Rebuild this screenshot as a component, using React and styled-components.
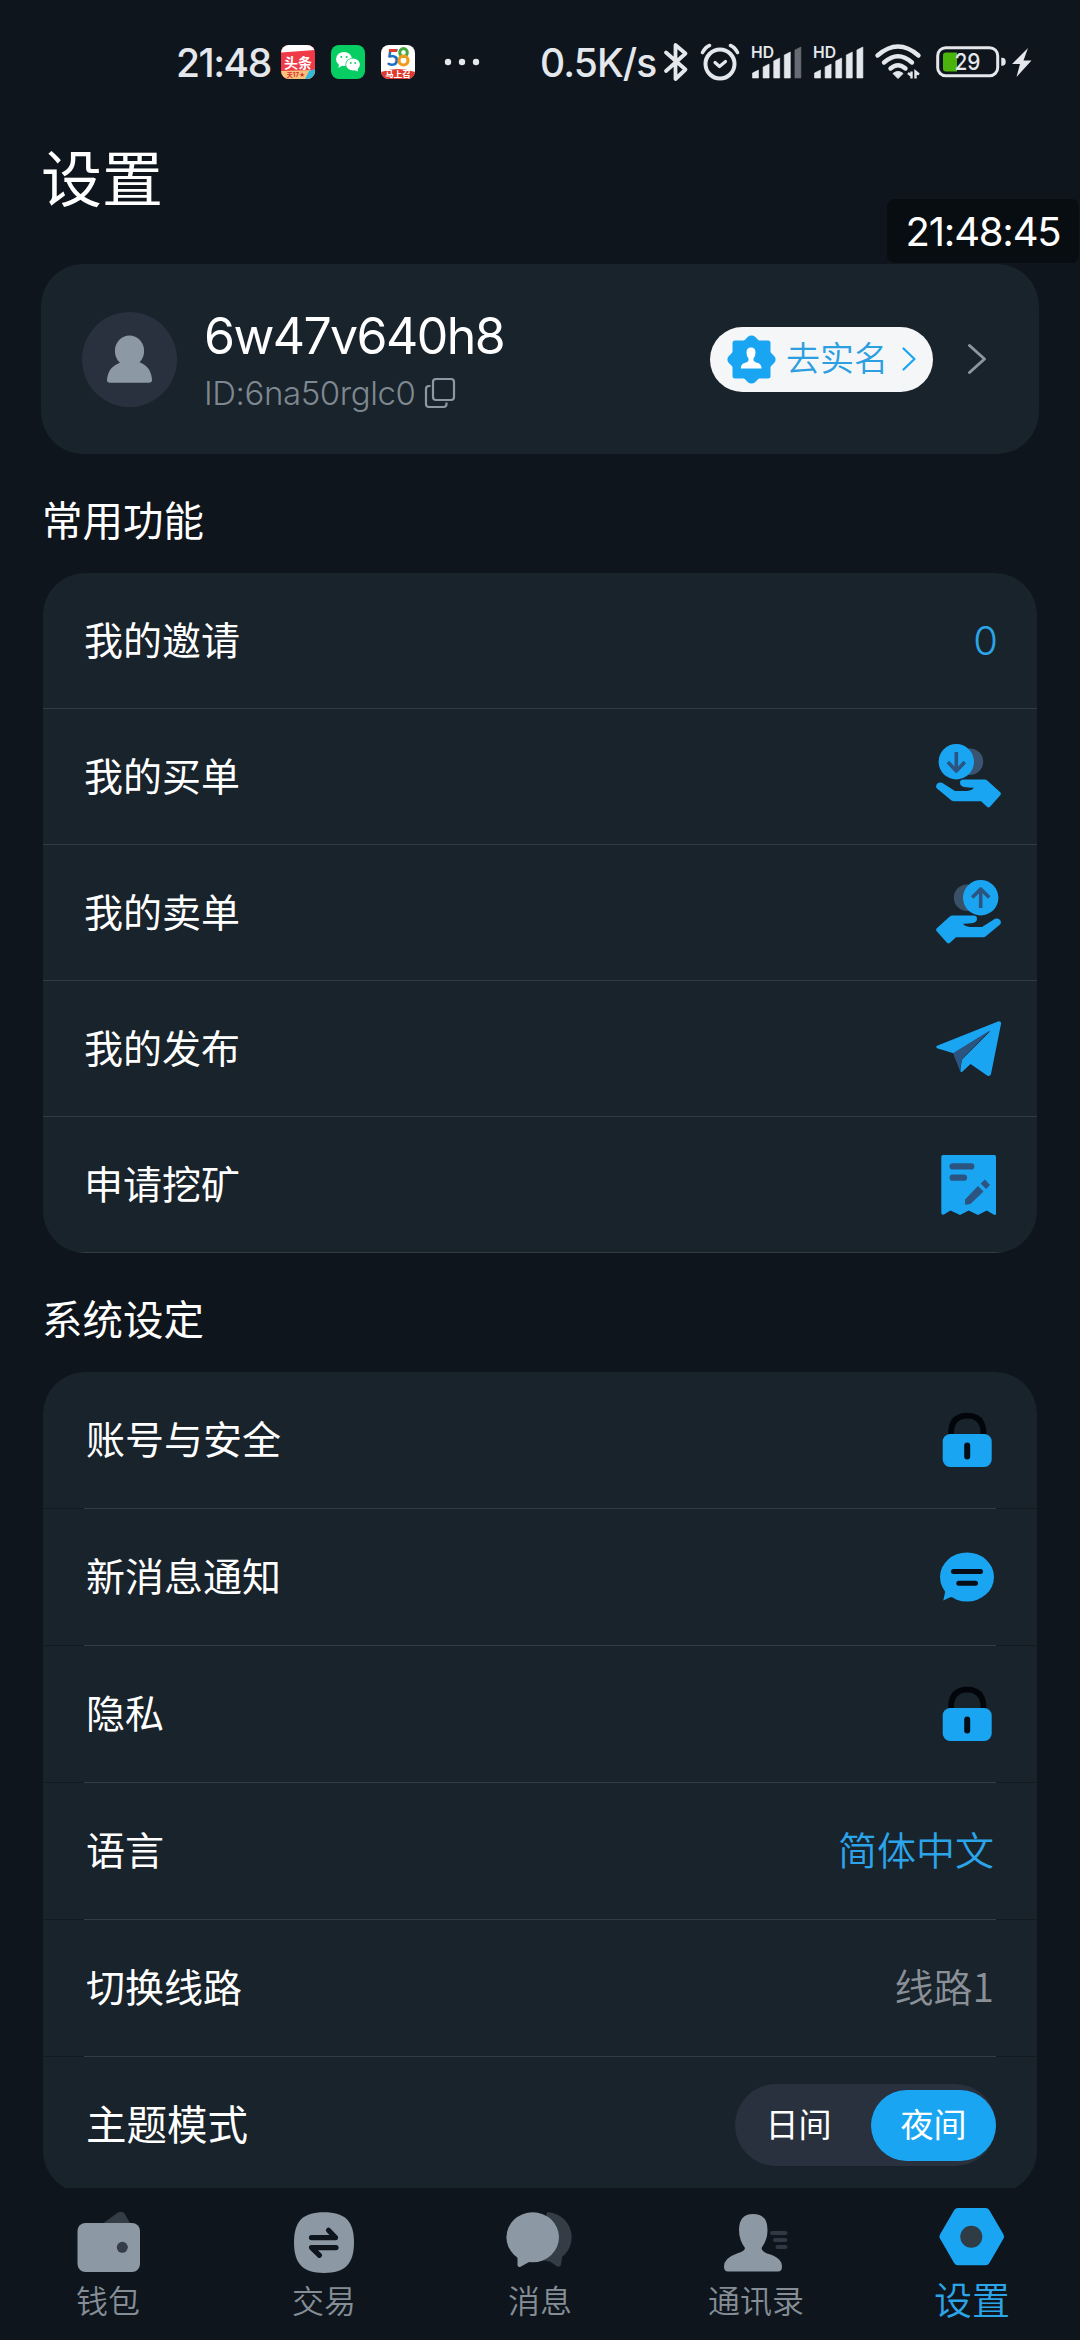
import React, { useState } from "react";
import styled, { createGlobalStyle, css } from "styled-components";

const BLUE = "#1aa5f3";
const GREY = "#8c98a4";
const DEEP = "#2b5580";

const GlobalStyle = createGlobalStyle`
  * {
    box-sizing: border-box;
  }

  body {
    margin: 0;
    background-color: #0e151c;
    font-family: Inter, "Noto Sans CJK SC", sans-serif;
    color: #ffffff;
  }

  svg {
    display: block;
    flex-shrink: 0;
    overflow: visible;
  }
`;

/* status bar icons */

const ToutiaoIcon = () => (
  <svg width="34" height="34" viewBox="0 0 34 34">
    <clipPath id="appClip">
      <rect width="34" height="34" rx="8" />
    </clipPath>
    <g clipPath="url(#appClip)">
      <rect width="34" height="34" fill="#f03a48" />
      <path d="M0 0H34V5L0 7.5Z" fill="#ffffff" />
      <path d="M0 26L34 25V34H0Z" fill="#f6c27c" />
      <path d="M28 26L34 24V34H24Z" fill="#35b6d8" />
    </g>
    <text x="17" y="22.500" textAnchor="middle" fontSize="14" fontWeight="700" fill="#ffffff">
      头条
    </text>
    <text x="15" y="32" textAnchor="middle" fontSize="6" fontWeight="700" fill="#d8322c">
      天17★
    </text>
  </svg>
);

const WechatIcon = () => (
  <svg width="34" height="34" viewBox="0 0 34 34">
    <rect width="34" height="34" rx="8" fill="#06ce62" />
    <ellipse cx="13" cy="14" rx="8" ry="7" fill="#ffffff" />
    <path d="M8 18L7.500 23L12 20Z" fill="#ffffff" />
    <ellipse cx="22" cy="19.500" rx="7.600" ry="6.600" fill="#06ce62" />
    <ellipse cx="22" cy="19.500" rx="6.900" ry="5.900" fill="#ffffff" />
    <path d="M23 25L27 26.500L26.500 22Z" fill="#ffffff" />
    <g fill="#06ce62">
      <circle cx="10.300" cy="12" r="1" />
      <circle cx="15.600" cy="12" r="1" />
      <circle cx="19.800" cy="18" r="0.900" />
      <circle cx="24.200" cy="18" r="0.900" />
    </g>
  </svg>
);

const FiveEightIcon = () => (
  <svg width="34" height="34" viewBox="0 0 34 34">
    <rect width="34" height="34" rx="8" fill="#ffffff" />
    <path d="M0 27Q17 21 34 27Q33 34 26 34H8Q1 34 0 27Z" fill="#e03a2e" />
    <text x="5" y="20.500" fontSize="23" fontWeight="700" fontFamily="Lato" fill="#1d6fc0">
      5
    </text>
    <ellipse cx="22.500" cy="7.500" rx="3.800" ry="4" fill="none" stroke="#43a83c" strokeWidth="3" />
    <ellipse cx="22.500" cy="15.500" rx="4.500" ry="4.500" fill="none" stroke="#f39a1c" strokeWidth="3.200" />
    <path d="M8 5.500H16" stroke="#e03a2e" strokeWidth="3" />
    <text x="17" y="32" textAnchor="middle" fontSize="8.500" fontWeight="700" fill="#ffffff">
      马上召
    </text>
  </svg>
);

const MoreDots = () => (
  <svg width="36" height="8" viewBox="0 0 36 8" fill="#e4e7ec">
    <circle cx="4" cy="4" r="3.200" />
    <circle cx="18" cy="4" r="3.200" />
    <circle cx="32" cy="4" r="3.200" />
  </svg>
);

const BluetoothIcon = () => (
  <svg width="24" height="40" viewBox="0 0 24 40">
    <path
      d="M2 10.500L21.500 27.500L11.500 37V3L21.500 11.500L2 29"
      fill="none"
      stroke="#e4e7ec"
      strokeWidth="3.800"
      strokeLinejoin="round"
      strokeLinecap="round"
    />
  </svg>
);

const AlarmIcon = () => (
  <svg width="40" height="38" viewBox="0 0 40 38">
    <g fill="none" stroke="#e4e7ec" strokeWidth="4" strokeLinecap="round" strokeLinejoin="round">
      <circle cx="20" cy="21" r="14.500" />
      <path d="M2.500 9.500Q5.500 4 9.500 2.500M37.500 9.500Q34.500 4 30.500 2.500" strokeWidth="3.600" />
      <path d="M15 19.500L19.500 23.500L25.500 18.500" strokeWidth="3.200" />
    </g>
  </svg>
);

const SignalIcon = ({ level }) => (
  <svg width="50" height="34" viewBox="0 0 50 34">
    <text x="-1" y="13" fontSize="15.500" fontWeight="600" fill="#e4e7ec" textLength="23" lengthAdjust="spacingAndGlyphs">
      HD
    </text>
    {[8, 14, 20, 26, 31].map((h, i) => (
      <path
        key={h}
        d={`M${i * 10.6 + 0.5} 33V${36 - h}L${i * 10.6 + 6.5} ${33 - h}V33Z`}
        fill={i < level ? "#e4e7ec" : "#676b73"}
        stroke={i < level ? "#e4e7ec" : "#676b73"}
        strokeWidth="0.600"
        strokeLinejoin="round"
      />
    ))}
  </svg>
);

const WifiIcon = () => (
  <svg width="48" height="36" viewBox="1 0 48 36">
    <g fill="none" stroke="#e4e7ec" strokeWidth="4.400" strokeLinecap="round">
      <path d="M2.500 11.500Q23 -6.500 43.500 11.500" />
      <path d="M9 18.500Q23 6 37 18.500" />
      <path d="M15.500 24.500Q23 18 30.500 24.500" />
    </g>
    <path d="M18 29.500Q23 25.500 28 29.500L23 34.500Z" fill="#e4e7ec" stroke="#e4e7ec" strokeLinejoin="round" />
    <path d="M33 29L36.500 32V27.500V34.500M40.500 34.500V27.500L44 30.500" fill="none" stroke="#e4e7ec" strokeWidth="2.400" />
  </svg>
);

const BatteryIcon = () => (
  <svg width="70" height="32" viewBox="0 0 70 32">
    <rect x="1.700" y="1.700" width="60" height="28" rx="8" fill="none" stroke="#e4e7ec" strokeWidth="3" />
    <path d="M10 6.500H21V25.500H10Q7 25.500 7 22.500V9.500Q7 6.500 10 6.500Z" fill="#4bb40c" />
    <path d="M66 12.500Q69 12.500 69 15.700Q69 19 66 19Z" fill="#e4e7ec" stroke="#e4e7ec" strokeWidth="1.500" />
    <text x="31.500" y="24" textAnchor="middle" fontSize="23" fontWeight="500" fill="#e4e7ec" textLength="26" lengthAdjust="spacingAndGlyphs">
      29
    </text>
  </svg>
);

const BoltIcon = () => (
  <svg width="20" height="29" viewBox="0 0 20 29">
    <path d="M16 0L0 16H8L4.500 29L19.500 12.500H11.500Z" fill="#e4e7ec" />
  </svg>
);

/* profile icons */

const AvatarIcon = () => (
  <svg width="95" height="95" viewBox="0 0 95 95">
    <circle cx="47.500" cy="47.500" r="47.500" fill="#28313d" />
    <ellipse cx="47.500" cy="39" rx="14.600" ry="15.500" fill={GREY} />
    <path d="M37 48L40 50Q26 54 25 68Q25 70.700 28 70.700H67Q70 70.700 70 68Q69 54 57 50L58 48Z" fill={GREY} />
  </svg>
);

const CopyIcon = () => (
  <svg width="30" height="30" viewBox="0 0 30 30" fill="none" stroke={GREY} strokeWidth="2.200">
    <rect x="8" y="1" width="21" height="21" rx="3" />
    <path d="M5.500 8H4Q1 8 1 11V26Q1 29 4 29H18.500Q21.500 29 21.500 26V24.500" />
  </svg>
);

const VerifyIcon = () => (
  <svg width="49" height="49" viewBox="0 0 49 49">
    <rect x="5.500" y="5.500" width="38" height="38" rx="2.500" fill={BLUE} />
    <rect x="6" y="6" width="37" height="37" rx="5" fill={BLUE} transform="rotate(45 24.500 24.500)" />
    <path
      d="M19.500 17.500Q19.500 12.500 24 12.500Q28.500 12.500 28.500 17.500Q28.500 21.500 26.500 23.500V25.500Q28 27.500 31 28Q34.500 29 34.500 33.500H13.800Q13.800 29 17.500 28Q20.500 27.500 21.500 25.500V23.500Q19.500 21.500 19.500 17.500Z"
      fill="#ffffff"
    />
  </svg>
);

const Chevron = ({ width, height, color, stroke }) => (
  <svg width={width} height={height} viewBox={`0 0 ${width} ${height}`}>
    <path
      d={`M1.500 1.500L${width - 1.5} ${height / 2}L1.500 ${height - 1.5}`}
      fill="none"
      stroke={color}
      strokeWidth={stroke}
      strokeLinecap="round"
      strokeLinejoin="round"
    />
  </svg>
);

/* list icons */

const HAND =
  "M1 44.500Q-0.500 42.500 0.500 40.500Q2.500 37.500 6 38.800L19 47H31Q36 46.500 38 43.800Q34 44 28 43Q24 42 24 38.800Q24 35.500 27.500 35.500H48.500Q50 35.500 51.500 36.800L64.500 48.500Q65.300 49.800 64.500 51L54 62.800Q52.500 64 51 62.800L45 57.300H18Q16.500 57.300 15.500 56.500Z";

const BuyIcon = () => (
  <svg width="65" height="65" viewBox="0 0 65 65">
    <circle cx="34" cy="17.700" r="13.200" fill="#395370" />
    <circle cx="20.300" cy="17.700" r="17.700" fill={BLUE} />
    <path d="M20.300 8V27M11.800 18L20.300 27L28.800 18" fill="none" stroke={DEEP} strokeWidth="3.600" strokeLinejoin="round" />
    <path d={HAND} fill={BLUE} />
  </svg>
);

const SellIcon = () => (
  <svg width="65" height="65" viewBox="0 0 65 65">
    <circle cx="31" cy="17.700" r="13.200" fill="#3a5067" />
    <circle cx="44.700" cy="17.700" r="17.700" fill={BLUE} />
    <path d="M44.700 28V9M36.200 17.500L44.700 9L53.200 17.500" fill="none" stroke={DEEP} strokeWidth="3.600" strokeLinejoin="round" />
    <path d={HAND} fill={BLUE} transform="translate(65 0) scale(-1 1)" />
  </svg>
);

const PlaneIcon = () => (
  <svg width="65" height="56" viewBox="0 0 65 56">
    <path d="M17.500 32.300L1 27.200Q-0.800 26 1 24.800L62 0.400Q65.400 -0.200 65 3L55 53Q54 55.800 51.500 54.700L34.500 43L26.500 50.500Q24.200 52 24.200 49L26 38.500L54.500 10Z" fill={BLUE} />
    <path d="M17 32.300L24.500 51Q24.400 41 26.500 37.500L54.500 9Z" fill={DEEP} />
  </svg>
);

const ReceiptIcon = () => (
  <svg width="65" height="60" viewBox="0 0 65 60">
    <path d="M7 0H58.300Q60 0 60 1.700V59.500Q59 60.200 57.500 59.500L50.700 55.500L42 60L32.700 55.500L24 60L14.500 55.500L7.500 59.700Q5.300 60 5.300 58V1.700Q5.300 0 7 0Z" fill={BLUE} />
    <path d="M16.600 11.400H35.300M16.600 22.700H28" fill="none" stroke={DEEP} strokeWidth="6.200" strokeLinecap="round" />
    <path d="M29.500 44.500L42 31.500L47 36.500L34.500 48.500L29.500 49.300Z" fill={DEEP} stroke={DEEP} strokeLinejoin="round" />
    <path d="M44.700 28.500L49 24.500L54 30L50 34Z" fill={DEEP} />
  </svg>
);

const LockIcon = () => (
  <svg width="56" height="56" viewBox="0 0 56 56">
    <path d="M11 24V20Q12 3.700 27.200 3.700Q42.500 3.700 43.500 20V24" fill="none" stroke="#02060a" strokeWidth="5.800" />
    <rect x="2.700" y="22" width="49" height="33" rx="7.500" fill={BLUE} />
    <rect x="24.200" y="30.500" width="6" height="17" rx="3" fill="#040d16" />
  </svg>
);

const NoticeIcon = () => (
  <svg width="56" height="56" viewBox="0 0 56 56">
    <ellipse cx="27" cy="28" rx="27" ry="24.500" fill={BLUE} />
    <path d="M3.300 51.500L6 39L15 47Q9 48 3.300 51.500Z" fill={BLUE} />
    <path d="M13.500 22.500H40.500M18.800 34.300H35.500" stroke="#060d16" strokeWidth="5" strokeLinecap="round" />
  </svg>
);

/* tab icons */

const WalletIcon = () => (
  <svg width="72" height="64" viewBox="0 0 72 64">
    <path d="M30 15L46 3.500Q50 1.500 52.500 4.500L58.500 15Z" fill="#343d46" />
    <rect x="5.500" y="14" width="62.500" height="49" rx="8" fill={GREY} />
    <circle cx="50.300" cy="38.300" r="5.500" fill="#343d48" />
  </svg>
);

const TradeIcon = () => (
  <svg width="72" height="64" viewBox="0 0 72 64">
    <path d="M36 3.300C57 3.300 66 12 66 33.600C66 55 57 64 36 64C15 64 6 55 6 33.600C6 12 15 3.300 36 3.300Z" fill={GREY} />
    <path
      d="M23.500 28.600H47.500L40.500 21.300M48 38.600H23.500L31.500 46.300"
      fill="none"
      stroke="#0e151c"
      strokeWidth="5.200"
      strokeLinecap="round"
      strokeLinejoin="round"
    />
  </svg>
);

const MessageIcon = () => (
  <svg width="72" height="64" viewBox="0 0 72 64">
    <path d="M43 3.300A25 25 0 0 1 58 48L57 56Q55.500 59 52.500 57L46 52.500L30 50Z" fill="#343d46" />
    <ellipse cx="28.700" cy="28.300" rx="26.300" ry="25" fill={GREY} />
    <path d="M13.500 45V56.500Q14.500 59 17 57.500L26 52.500Z" fill={GREY} />
  </svg>
);

const ContactsIcon = () => (
  <svg width="72" height="64" viewBox="0 0 72 64">
    <path
      d="M19 21Q19 5 33 5Q47.500 5 47.500 21Q47.500 31 41.500 39Q41.500 42 47 44.500Q62 48.500 62 57.500Q62 62.500 58 62.500H8Q4 62.500 4 57.500Q4 49 17 44.500Q25 42 25 39Q19 31 19 21Z"
      fill={GREY}
    />
    <path d="M52 24H65.500M55 31H65.500M57.500 38H65.500" stroke="#303943" strokeWidth="4" strokeLinecap="round" />
  </svg>
);

const SettingsIcon = () => (
  <svg width="72" height="64" viewBox="0 0 72 64">
    <path
      d="M8 27.500L22 3.500H49.500L63.500 27.500L49.500 51.700H22Z"
      fill={BLUE}
      stroke={BLUE}
      strokeWidth="9"
      strokeLinejoin="round"
    />
    <circle cx="35.300" cy="27.700" r="11" fill="#2f3b45" />
  </svg>
);

const commonItems = [
  { label: "我的邀请", value: "0" },
  { label: "我的买单", Icon: BuyIcon },
  { label: "我的卖单", Icon: SellIcon },
  { label: "我的发布", Icon: PlaneIcon },
  { label: "申请挖矿", Icon: ReceiptIcon },
];

const systemItems = [
  { label: "账号与安全", Icon: LockIcon },
  { label: "新消息通知", Icon: NoticeIcon },
  { label: "隐私", Icon: LockIcon },
  { label: "语言", value: "简体中文" },
  { label: "切换线路", value: "线路1", muted: true },
];

const tabs = [
  { label: "钱包", Icon: WalletIcon },
  { label: "交易", Icon: TradeIcon },
  { label: "消息", Icon: MessageIcon },
  { label: "通讯录", Icon: ContactsIcon },
  { label: "设置", Icon: SettingsIcon, active: true },
];

const App = () => {
  const [theme, setTheme] = useState("夜间");

  return (
    <Screen>
      <GlobalStyle />
      <StatusBar>
        <StatusLeft>
          <StatusTime>21:48</StatusTime>
          <AppIcons>
            <ToutiaoIcon />
            <WechatIcon />
            <FiveEightIcon />
          </AppIcons>
          <MoreDots />
        </StatusLeft>
        <StatusRight>
          <NetSpeed>0.5K/s</NetSpeed>
          <BluetoothIcon />
          <AlarmIcon />
          <SignalIcon level={4} />
          <SignalIcon level={5} />
          <WifiIcon />
          <Power>
            <BatteryIcon />
            <BoltIcon />
          </Power>
        </StatusRight>
      </StatusBar>
      <FloatingClock>21:48:45</FloatingClock>

      <Content>
        <PageTitle>设置</PageTitle>
        <ProfileCard>
          <AvatarIcon />
          <ProfileInfo>
            <UserName>6w47v640h8</UserName>
            <UserId>
              <span>ID:6na50rglc0</span>
              <CopyIcon />
            </UserId>
          </ProfileInfo>
          <VerifyButton>
            <VerifyIcon />
            <VerifyText>去实名</VerifyText>
            <Chevron width={14} height={24} color={BLUE} stroke={2.2} />
          </VerifyButton>
          <Chevron width={18} height={30} color="#8d969e" stroke={3} />
        </ProfileCard>

        <SectionTitle>常用功能</SectionTitle>
        <ListCard>
          {commonItems.map(({ label, value, Icon }) => (
            <CommonRow key={label}>
              <RowLabel>{label}</RowLabel>
              {Icon ? <Icon /> : <InviteCount>{value}</InviteCount>}
            </CommonRow>
          ))}
        </ListCard>

        <SectionTitle>系统设定</SectionTitle>
        <ListCard>
          {systemItems.map(({ label, value, muted, Icon }) => (
            <React.Fragment key={label}>
              <SystemRow>
                <RowLabel>{label}</RowLabel>
                {Icon ? <Icon /> : <RowValue $muted={muted}>{value}</RowValue>}
              </SystemRow>
              <Divider />
            </React.Fragment>
          ))}
          <SystemRow>
            <RowLabel $large>主题模式</RowLabel>
            <ThemeSwitch>
              {["日间", "夜间"].map((name) => (
                <ThemeOption
                  key={name}
                  $active={theme === name}
                  onClick={() => setTheme(name)}
                >
                  {name}
                </ThemeOption>
              ))}
            </ThemeSwitch>
          </SystemRow>
        </ListCard>
      </Content>

      <TabBar>
        {tabs.map(({ label, Icon, active }) => (
          <Tab key={label}>
            <Icon />
            <TabLabel $active={active}>{label}</TabLabel>
          </Tab>
        ))}
      </TabBar>
    </Screen>
  );
};

const Screen = styled.div`
  position: relative;
  display: flex;
  flex-direction: column;
  width: 1080px;
  height: 2340px;
  overflow: hidden;
  background-color: #0e151c;
`;

const StatusBar = styled.div`
  display: flex;
  justify-content: space-between;
  align-items: center;
  height: 124px;
  padding: 0 48px 0 176px;
  color: #e4e7ec;
  font-size: 39px;
  font-weight: 500;
`;

const StatusLeft = styled.div`
  display: flex;
  align-items: center;
`;

const StatusTime = styled.div`
  width: 105px;
  letter-spacing: -1.5px;
  white-space: nowrap;
`;

const AppIcons = styled.div`
  display: flex;
  gap: 16px;
  margin-right: 29px;
`;

const StatusRight = styled.div`
  display: flex;
  align-items: center;
  gap: 12px;
`;

const NetSpeed = styled.div`
  width: 112px;
  letter-spacing: -0.9px;
  white-space: nowrap;
`;

const Power = styled.div`
  display: flex;
  align-items: center;
  gap: 6px;
`;

const FloatingClock = styled.div`
  position: absolute;
  top: 199px;
  right: 1px;
  width: 192px;
  height: 64px;
  border-radius: 8px;
  background-color: #080d11;
  font-size: 40px;
  line-height: 65px;
  letter-spacing: -1.2px;
  text-align: center;
  white-space: nowrap;
`;

const Content = styled.main`
  flex: 1;
  min-height: 0;
  padding: 0 41px;
  overflow: hidden;
`;

const PageTitle = styled.h1`
  height: 140px;
  margin: 0;
  font-size: 61px;
  font-weight: 400;
  line-height: 112px;
`;

const ProfileCard = styled.section`
  display: flex;
  align-items: center;
  height: 190px;
  padding: 0 53px 0 41px;
  border-radius: 42px;
  background-color: #19232b;
`;

const ProfileInfo = styled.div`
  flex: 1;
  padding: 7px 0 0 27px;
`;

const UserName = styled.div`
  font-size: 50px;
  line-height: 60px;
  letter-spacing: -1.6px;
`;

const UserId = styled.div`
  display: flex;
  align-items: center;
  gap: 9px;
  color: #7f8890;
  font-size: 33px;
  font-weight: 350;
  line-height: 54px;
  letter-spacing: -0.4px;
`;

const VerifyButton = styled.div`
  display: flex;
  align-items: center;
  width: 223px;
  height: 65px;
  margin-right: 35px;
  padding-left: 17px;
  border-radius: 33px;
  background-color: #f5f6f8;
`;

const VerifyText = styled.span`
  width: 126px;
  padding: 0 0 5px 10px;
  color: #2b9fe0;
  font-size: 34px;
  font-weight: 350;
  white-space: nowrap;
`;

const SectionTitle = styled.h2`
  display: flex;
  align-items: center;
  height: 119px;
  margin: 0;
  padding: 9px 0 0 1px;
  font-size: 40.5px;
  font-weight: 400;
`;

const ListCard = styled.section`
  margin: 0 2px;
  border-radius: 42px;
  background-color: #19232b;
  overflow: hidden;
`;

const CommonRow = styled.div`
  display: flex;
  justify-content: space-between;
  align-items: center;
  height: 136px;
  padding: 0 36px 0 41px;
  border-bottom: 1px solid #323c44;
`;

const SystemRow = styled.div`
  display: flex;
  justify-content: space-between;
  align-items: center;
  height: 136px;
  padding: 0 41px 0 43px;
`;

const Divider = styled.div`
  height: 1px;
  border: 0 solid #131b22;
  border-width: 0 41px;
  background-color: #323c44;
`;

const RowLabel = styled.span`
  padding-bottom: 6px;
  font-size: ${({ $large }) => ($large ? "40.5px" : "39px")};
`;

const InviteCount = styled.span`
  margin-right: 3px;
  color: #2ba4e8;
  font-size: 40px;
  font-weight: 350;
`;

const RowValue = styled.span`
  margin-right: 2px;
  padding-bottom: 6px;
  color: ${({ $muted }) => ($muted ? "#8a9097" : "#2ba4ea")};
  font-family: "Noto Sans CJK SC", sans-serif;
  font-size: 39px;
  font-weight: 350;
`;

const ThemeSwitch = styled.div`
  display: flex;
  align-items: center;
  width: 261px;
  height: 82px;
  border-radius: 41px;
  background-color: #28313d;
`;

const ThemeOption = styled.div`
  flex: 1;
  height: 71px;
  padding-right: 9px;
  border-radius: 36px;
  font-size: 33px;
  line-height: 71px;
  text-align: center;

  ${({ $active }) =>
    $active &&
    css`
      flex: 0 0 125px;
      padding-right: 0;
      background-color: ${BLUE};
    `}
`;

const TabBar = styled.nav`
  display: flex;
  flex-shrink: 0;
  height: 152px;
  background-color: #0e151c;
`;

const Tab = styled.div`
  flex: 1;
  display: flex;
  flex-direction: column;
  align-items: center;
  padding-top: 21px;
`;

const TabLabel = styled.span`
  margin-top: 9px;
  color: #858d96;
  font-size: 32px;
  font-weight: 350;
  line-height: 40px;

  ${({ $active }) =>
    $active &&
    css`
      margin-top: 7px;
      color: #2ba4e8;
      font-size: 38px;
    `}
`;

export default App;
